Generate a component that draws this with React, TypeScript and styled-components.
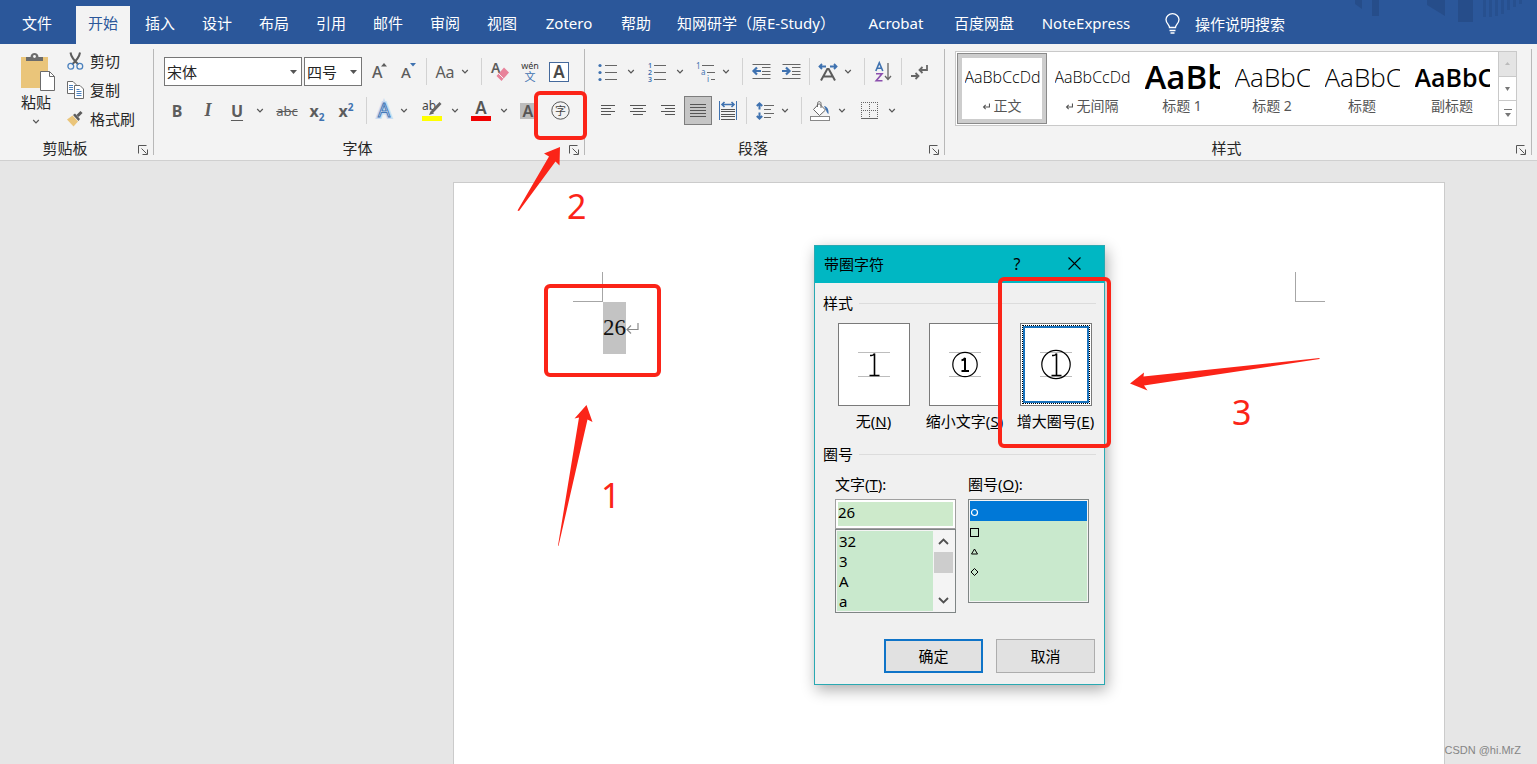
import React from "react";
import styled, { createGlobalStyle, css } from "styled-components";

const sans = `"Noto Sans", "Noto Sans CJK SC", sans-serif`;
const RED = "#fb2418";
const GREY = "#5c5c5c";
const BLUE = "#3f72b0";

const Global = createGlobalStyle`
  *, *::before, *::after { box-sizing: border-box; }
  body { margin: 0; font-family: ${sans}; font-size: 15px; color: #262626; background: #e6e6e6; }
  button, input, select { font: inherit; color: inherit; margin: 0; }
  svg { display: block; overflow: visible; }
`;

const Screen = styled.div`
  position: relative;
  display: flex;
  flex-direction: column;
  min-height: 100vh;
  overflow: hidden;
`;

/* ---------- tab bar ---------- */

const TabBar = styled.header`
  position: relative;
  display: flex;
  align-items: flex-end;
  gap: 3px;
  height: 44px;
  padding-left: 10px;
  background: #2b579a;
  color: #fff;
`;

const TabArt = styled.svg`
  position: absolute;
  right: 0;
  top: 0;
`;

const Tab = styled.a<{ $active?: boolean; $file?: boolean; $width?: number }>`
  display: flex;
  align-items: center;
  justify-content: center;
  height: 38px;
  width: ${(p) => p.$width ?? 54}px;
  margin-right: ${(p) => (p.$file ? 9 : 0)}px;
  padding-bottom: 5px;
  white-space: nowrap;
  text-decoration: none;
  color: ${(p) => (p.$active ? "#2b579a" : "#fff")};
  background: ${(p) => (p.$active ? "#f3f3f3" : "transparent")};
`;

const Ask = styled.button`
  display: flex;
  align-items: center;
  gap: 15px;
  height: 38px;
  padding: 0 0 3px 15px;
  border: 0;
  background: none;
  color: #fff;
  white-space: nowrap;
`;

/* ---------- ribbon ---------- */

const Ribbon = styled.div`
  display: flex;
  padding: 5px 5px 5px 0;
  background: #f3f3f3;
  border-bottom: 1px solid #d0d0d0;
`;

const Group = styled.section<{ $width?: number }>`
  display: flex;
  flex-direction: column;
  height: 106px;
  border-right: 1px solid #b8b8b8;
  ${(p) =>
    p.$width
      ? css`
          flex: 0 0 ${p.$width}px;
        `
      : css`
          flex: 1;
          min-width: 0;
        `}
`;

const GroupBody = styled.div`
  flex: 1;
  min-height: 0;
`;

const GroupFoot = styled.footer`
  display: flex;
  align-items: center;
  height: 16px;
  line-height: 16px;
  padding-right: 5px;
`;

const GroupName = styled.span`
  flex: 1;
  text-align: center;
  padding: 2px 8px 0 0;
`;

const Launcher = styled.button`
  padding: 5px 0 0;
  border: 0;
  background: none;
`;

const ToolRows = styled(GroupBody)`
  display: flex;
  flex-direction: column;
  gap: 10px;
  padding: 8px 0 0 10px;
`;

const ToolRow = styled.div`
  display: flex;
  align-items: center;
  height: 29px;
`;

const ToolButton = styled.button<{ $w: number; $after?: number; $pressed?: boolean }>`
  display: flex;
  align-items: center;
  justify-content: center;
  flex: none;
  width: ${(p) => p.$w}px;
  height: 29px;
  margin-right: ${(p) => p.$after ?? 0}px;
  padding: 0;
  color: ${GREY};
  border: ${(p) => (p.$pressed ? "1px solid #7d7d7d" : "0")};
  background: ${(p) => (p.$pressed ? "#c5c5c5" : "none")};
`;

const Rule = styled.span<{ $before: number; $after: number }>`
  flex: none;
  width: 1px;
  height: 27px;
  margin: 0 ${(p) => p.$after}px 0 ${(p) => p.$before}px;
  background: #d2d2d2;
`;

const Combo = styled.label<{ $w: number }>`
  position: relative;
  width: ${(p) => p.$w}px;
  height: 29px;
  margin-right: 2px;
  svg {
    position: absolute;
    right: 5px;
    top: 13px;
  }
`;

const ComboSelect = styled.select`
  appearance: none;
  width: 100%;
  height: 29px;
  padding: 0 0 0 2px;
  border: 1px solid #767676;
  border-radius: 0;
  background: #fff;
`;

const Letter = styled.span<{ $kind?: "bold" | "italic" | "underline" | "strike" | "script" }>`
  line-height: 20px;
  font-size: 16px;
  ${(p) => p.$kind === "bold" && "font-weight: 700;"}
  ${(p) => p.$kind === "italic" && `font: italic 700 18px "Liberation Serif", serif;`}
  ${(p) => p.$kind === "underline" && "font-weight: 700; text-decoration: underline 1px; text-underline-offset: 3px;"}
  ${(p) => p.$kind === "strike" && "font-size: 13px; text-decoration: line-through;"}
  ${(p) => p.$kind === "script" && "font-weight: 700;"}
  sub, sup {
    font-size: 10px;
    line-height: 0;
    color: ${BLUE};
  }
`;

/* ---------- clipboard ---------- */

const Clipboard = styled(GroupBody)`
  display: flex;
  gap: 8px;
  padding-left: 15px;
`;

const PasteButton = styled.button`
  display: flex;
  flex-direction: column;
  align-items: center;
  width: 42px;
  height: 80px;
  padding: 4px 0 0;
  border: 0;
  background: none;
  line-height: 22px;
`;

const PasteName = styled.span`
  margin-bottom: 6px;
`;

const ClipList = styled.div`
  display: flex;
  flex-direction: column;
  gap: 5px;
`;

const ClipButton = styled.button`
  display: flex;
  align-items: center;
  gap: 6px;
  height: 24px;
  padding: 0 0 0 2px;
  border: 0;
  background: none;
  line-height: 24px;
`;

/* ---------- style gallery ---------- */

const GalleryWrap = styled(GroupBody)`
  padding: 2px 14px 0 10px;
`;

const Gallery = styled.div`
  display: flex;
  height: 75px;
  padding: 1px 0 1px 1px;
  border: 1px solid #c9c9c9;
  background: #fff;
`;

const StyleList = styled.div`
  display: flex;
  flex: 1;
  min-width: 0;
  overflow: hidden;
`;

const StyleTile = styled.button<{ $current?: boolean }>`
  flex: 0 0 90px;
  display: flex;
  flex-direction: column;
  align-items: center;
  padding: ${(p) => (p.$current ? "5px 6px" : "6px 7px")};
  border: ${(p) => (p.$current ? "1px solid #8a8a8a" : "0")};
  box-shadow: ${(p) => (p.$current ? "inset 0 0 0 4px #cdcdcd" : "none")};
  background: none;
`;

const Preview = styled.span<{ $size: number; $weight?: number }>`
  display: block;
  width: 75px;
  height: 36px;
  line-height: 36px;
  overflow: hidden;
  text-align: left;
  white-space: nowrap;
  color: #000;
  font-family: "Open Sans", "Noto Sans", sans-serif;
  font-size: ${(p) => p.$size}px;
  font-weight: ${(p) => p.$weight ?? 300};
`;

const StyleName = styled.span`
  display: flex;
  align-items: center;
  gap: 4px;
  font-size: 14px;
  line-height: 24px;
  color: #555;
`;

const GalleryNav = styled.div`
  display: flex;
  flex-direction: column;
  flex: 0 0 18px;
  margin: -1px 0;
  border-left: 1px solid #c9c9c9;
`;

const NavButton = styled.button<{ $off?: boolean }>`
  display: flex;
  align-items: center;
  justify-content: center;
  flex: 1;
  padding: 0;
  border: 0;
  background: ${(p) => (p.$off ? "#e4e4e4" : "#fff")};
  & + & {
    border-top: 1px solid #c9c9c9;
  }
`;

/* ---------- document ---------- */

const Desk = styled.main`
  flex: 1;
  display: flex;
  padding: 21px 92px 0 453px;
`;

const Paper = styled.article`
  flex: 1;
  padding: 89px 119px 0;
  border: 1px solid #cbcbcb;
  border-bottom: 0;
  background: #fff;
`;

const MarginMarks = styled.div`
  display: flex;
  justify-content: space-between;
`;

const Mark = styled.span<{ $side: "left" | "right" }>`
  width: 30px;
  height: 30px;
  border-bottom: 1px solid #a6a6a6;
  border-${(p) => (p.$side === "left" ? "right" : "left")}: 1px solid #a6a6a6;
`;

const Paragraph = styled.p`
  display: flex;
  align-items: center;
  margin: 0;
  padding-left: 30px;
  font-family: "Liberation Serif", serif;
  font-size: 23px;
  line-height: 52px;
  color: #111;
`;

const Selected = styled.mark`
  background: #c3c3c3;
  color: inherit;
`;

/* ---------- dialog ---------- */

const Dialog = styled.section`
  position: absolute;
  left: 814px;
  top: 245px;
  width: 291px;
  border: 1px solid #2aa9b2;
  background: #f0f0f0;
  color: #000;
  box-shadow: 2px 5px 14px rgba(0, 0, 0, 0.32);
`;

const DialogTitle = styled.header`
  display: flex;
  align-items: center;
  height: 37px;
  padding: 0 9px;
  background: #00b7c3;
`;

const DialogName = styled.h2`
  flex: 1;
  margin: 0;
  padding-bottom: 2px;
  font-size: 15px;
  font-weight: 400;
`;

const TitleButton = styled.button<{ $w: number }>`
  display: flex;
  align-items: center;
  justify-content: center;
  width: ${(p) => p.$w}px;
  height: 37px;
  padding: 0 0 2px;
  border: 0;
  background: none;
  font-size: 16px;
`;

const DialogBody = styled.div`
  padding: 10px 8px 11px;
`;

const SectionHead = styled.h3`
  display: flex;
  align-items: center;
  gap: 6px;
  margin: 0;
  font-size: 15px;
  font-weight: 400;
  line-height: 20px;
  &::after {
    content: "";
    flex: 1;
    height: 1px;
    background: #dcdcdc;
  }
`;

const Choices = styled.div`
  display: grid;
  grid-template-columns: repeat(3, 91px);
  margin: 10px 0 13px 5px;
`;

const Choice = styled.label`
  display: flex;
  flex-direction: column;
  align-items: center;
  gap: 5px;
  line-height: 20px;
  white-space: nowrap;
  input {
    position: absolute;
    opacity: 0;
  }
`;

const ChoiceBox = styled.span<{ $on?: boolean }>`
  display: block;
  width: 72px;
  height: 83px;
  padding: 1px;
  border: 1px solid #7a7a7a;
  background: #fff;
  & > span {
    display: flex;
    align-items: center;
    justify-content: center;
    height: 79px;
    padding-bottom: 2px;
    ${(p) =>
      p.$on &&
      css`
        border: 1px dotted #000;
        box-shadow: inset 0 0 0 2px #1a73bd;
      `}
  }
`;

const Fields = styled.div`
  display: grid;
  grid-template-columns: 121px 121px;
  gap: 12px;
  margin: 10px 0 26px 12px;
`;

const Field = styled.div`
  display: flex;
  flex-direction: column;
`;

const FieldLabel = styled.label`
  margin-bottom: 5px;
  line-height: 20px;
`;

const CharInput = styled.input`
  width: 100%;
  height: 30px;
  padding: 0 2px 4px;
  border: 1px solid #a0a0a0;
  border-radius: 0;
  outline: 0;
  background: #cdeacb;
  box-shadow: inset 0 0 0 2px #fff;
`;

const ListFrame = styled.div<{ $h: number }>`
  display: flex;
  height: ${(p) => p.$h}px;
  padding: 1px;
  border: 1px solid #7f8585;
  background: #f4f4f4;
`;

const Options = styled.ul`
  flex: 1;
  margin: 0;
  padding: 0;
  list-style: none;
  background: #c9e9cd;
  overflow: hidden;
`;

const Option = styled.li<{ $on?: boolean; $mark?: boolean }>`
  display: flex;
  align-items: center;
  height: 20px;
  padding: ${(p) => (p.$mark ? "3px 0 0 0" : "0 0 0 2px")};
  line-height: 20px;
  color: ${(p) => (p.$on ? "#fff" : "#000")};
  background: ${(p) => (p.$on ? "#0078d7" : "transparent")};
`;

const ScrollBar = styled.div`
  display: flex;
  flex-direction: column;
  align-items: center;
  width: 21px;
  background: #f4f4f4;
`;

const ScrollButton = styled.button`
  display: flex;
  align-items: center;
  justify-content: center;
  width: 19px;
  height: 21px;
  padding: 0;
  border: 0;
  background: none;
`;

const ScrollThumb = styled.span`
  width: 19px;
  height: 21px;
  margin-bottom: auto;
  background: #cdcdcd;
`;

const Actions = styled.footer`
  display: flex;
  justify-content: flex-end;
  gap: 13px;
  padding-right: 1px;
`;

const ActionButton = styled.button<{ $primary?: boolean }>`
  width: 99px;
  height: 34px;
  padding: 0 0 2px;
  border: ${(p) => (p.$primary ? "2px solid #0f74c8" : "1px solid #adadad")};
  background: #e1e1e1;
`;

/* ---------- tutorial annotations ---------- */

const Frame = styled.div<{ $x: number; $y: number; $w: number; $h: number }>`
  position: absolute;
  left: ${(p) => p.$x}px;
  top: ${(p) => p.$y}px;
  width: ${(p) => p.$w}px;
  height: ${(p) => p.$h}px;
  border: 4px solid ${RED};
  border-radius: 6px;
  pointer-events: none;
`;

const ArrowSvg = styled.svg<{ $x: number; $y: number }>`
  position: absolute;
  left: ${(p) => p.$x}px;
  top: ${(p) => p.$y}px;
  fill: ${RED};
  pointer-events: none;
`;

const StepNumber = styled.span<{ $x: number; $y: number }>`
  position: absolute;
  left: ${(p) => p.$x}px;
  top: ${(p) => p.$y}px;
  font-size: 34px;
  line-height: 40px;
  color: ${RED};
`;

const Watermark = styled.span`
  position: absolute;
  right: 16px;
  bottom: 6px;
  font: 11px/16px "Liberation Sans", sans-serif;
  color: #858585;
`;

/* ---------- icons ---------- */

const Chevron = () => (
  <svg width="8" height="5" viewBox="0 0 8 5" fill="none" stroke="#555" strokeWidth="1.2">
    <path d="M1.2 1 4 3.8 6.8 1" />
  </svg>
);

const Triangle = ({ color = "#555" }: { color?: string }) => (
  <svg width="7" height="4" viewBox="0 0 7 4" fill={color}>
    <path d="M0 0h7L3.5 4z" />
  </svg>
);

const LauncherIcon = () => (
  <svg width="10" height="10" viewBox="0 0 10 10" fill="none" stroke="#555">
    <path d="M.5 8.500V.5h8M3.500 3.500l5 5M9.500 4.500v5h-5" />
  </svg>
);

const PasteIcon = () => (
  <svg width="40" height="38" viewBox="-4 0 40 38">
    <rect x="1" y="4" width="27" height="31" fill="#eac57a" />
    <path d="M6 4h4.500c0-5.500 8-5.500 8 0H23v4H6z" fill="#6b6b6b" />
    <circle cx="14.500" cy="3.500" r="1.400" fill="#f3f3f3" />
    <path d="M20.500 18.500h9l5 5v14h-14z" fill="#fff" stroke="#6b6b6b" />
    <path d="M29.500 18.500v5h5" fill="none" stroke="#6b6b6b" />
  </svg>
);

const CutIcon = () => (
  <svg width="17" height="18" viewBox="0 0 17 18" fill="none">
    <path d="M3.500.5C4 4 7 8.500 11.500 12.500M13 .5C12.500 4 9.500 8.500 5 12.500" stroke="#5c5c5c" strokeWidth="2" />
    <circle cx="3.800" cy="14.300" r="2.900" stroke="#4a80bd" strokeWidth="1.300" />
    <circle cx="12.800" cy="14.300" r="2.900" stroke="#4a80bd" strokeWidth="1.300" />
  </svg>
);

const CopyIcon = () => (
  <svg width="17" height="18" viewBox="0 0 17 18" fill="#fff" stroke="#6b6b6b">
    <path d="M.5.5h5.500l3 3v9H.5z" />
    <path d="M2 4.500h4M2 6.500h4M2 8.500h4" stroke="#4a80bd" />
    <path d="M7.500 4.500h5.500l3.500 3.500v9.500h-9z" />
    <path d="M9.500 8.500h3M9.500 10.500h5M9.500 12.500h5M9.500 14.500h5" stroke="#4a80bd" />
  </svg>
);

const BrushIcon = () => (
  <svg width="17" height="16" viewBox="0 0 17 16">
    <path d="M5.500 4.500 11 10.500 6.500 15.500 0 8.500z" fill="#eac57a" />
    <path d="M6 4 8 2.500 13 8 11.500 10z" fill="#5c5c5c" />
    <path d="M10.500 5 14.500 1" stroke="#5c5c5c" strokeWidth="3" />
  </svg>
);

const GrowIcon = ({ down }: { down?: boolean }) => (
  <svg width="16" height="18" viewBox="0 0 16 18" fill={GREY}>
    <text x="1" y="15" fontSize={down ? 15 : 16} fontWeight="500">A</text>
    {down ? <path d="M10 0h6l-3 3.500z" fill={BLUE} /> : <path d="M10 3.500h6L13 0z" />}
  </svg>
);

const EraserIcon = () => (
  <svg width="20" height="20" viewBox="0 0 20 20">
    <text x="1" y="11" fontSize="14" fontWeight="600" fill={GREY}>A</text>
    <path d="M14 5.500 19 10.500 11.500 19 6.500 14z" fill="#e8829a" />
    <path d="M8.500 11.500 13.500 16.500" stroke="#f3f3f3" />
  </svg>
);

const PinyinIcon = () => (
  <svg width="20" height="20" viewBox="0 0 20 20">
    <text x="11" y="7" fontSize="9" textAnchor="middle" fill="#333">wén</text>
    <text x="11" y="19" fontSize="11" textAnchor="middle" fill={BLUE}>文</text>
  </svg>
);

const BoxedA = () => (
  <svg width="20" height="20" viewBox="0 0 20 20">
    <rect x=".5" y=".5" width="19" height="19" fill="#fff" stroke="#44699c" />
    <text x="10" y="16" fontSize="17" fontWeight="600" textAnchor="middle" fill="#4a4a4a">A</text>
  </svg>
);

const EffectA = () => (
  <svg width="18" height="20" viewBox="0 0 18 20">
    <text x="9" y="16" fontSize="19" textAnchor="middle" fill="#fff" stroke="#c9dcf1" strokeWidth="4">A</text>
    <text x="9" y="16" fontSize="19" textAnchor="middle" fill="#fff" stroke="#4478b8" strokeWidth="1">A</text>
  </svg>
);

const HighlightIcon = () => (
  <svg width="20" height="20" viewBox="0 0 20 20">
    <text x="0" y="9" fontSize="12" fill="#444">ab</text>
    <path d="M18.500 2 10 11" stroke="#666" strokeWidth="2.800" />
    <path d="M9 9.500l3 3-5 1.500z" fill="#666" />
    <rect y="15" width="20" height="5" fill="#ff0" />
  </svg>
);

const FontColorIcon = () => (
  <svg width="20" height="20" viewBox="0 0 20 20">
    <text x="10" y="13" fontSize="17" fontWeight="600" textAnchor="middle" fill="#555">A</text>
    <rect y="15" width="20" height="5" fill="#f00000" />
  </svg>
);

const ShadedA = () => (
  <svg width="16" height="18" viewBox="0 0 16 18">
    <rect y="1" width="16" height="16" fill="#bcbcbc" />
    <text x="8" y="15" fontSize="16" fontWeight="600" textAnchor="middle" fill="#555">A</text>
  </svg>
);

const CircledChar = () => (
  <svg width="19" height="19" viewBox="0 0 19 19">
    <circle cx="9.500" cy="9.500" r="8.700" fill="none" stroke="#555" />
    <text x="9.500" y="13.500" fontSize="11" textAnchor="middle" fill="#444">字</text>
  </svg>
);

const BulletsIcon = () => (
  <svg width="20" height="18" viewBox="0 0 20 18">
    <path d="M7 2.500h12M7 9.500h12M7 16.500h12" stroke="#666" />
    <g fill={BLUE}>
      <circle cx="2" cy="2.500" r="1.600" />
      <circle cx="2" cy="9.500" r="1.600" />
      <circle cx="2" cy="16.500" r="1.600" />
    </g>
  </svg>
);

const NumbersIcon = () => (
  <svg width="18" height="18" viewBox="0 0 18 18">
    <path d="M6 2.500h12M6 9.500h12M6 16.500h12" stroke="#666" />
    <g fill={BLUE} fontSize="7" fontWeight="600">
      <text x="0" y="5">1</text>
      <text x="0" y="12">2</text>
      <text x="0" y="19">3</text>
    </g>
  </svg>
);

const MultiIcon = () => (
  <svg width="20" height="18" viewBox="0 0 20 18">
    <path d="M6 2.500h12M11 9.500h8M15 16.500h4" stroke="#666" />
    <g fill={BLUE} fontSize="8">
      <text x="0" y="6">1</text>
      <text x="5" y="12">a</text>
      <text x="11" y="19">i</text>
    </g>
  </svg>
);

const IndentIcon = ({ out }: { out?: boolean }) => (
  <svg width="19" height="17" viewBox="0 0 19 17" fill="none">
    <path d="M.5 1.500h18M10 4.500h8.500M10 8.500h8.500M10 11.500h8.500M.5 15.500h18" stroke="#666" />
    <path
      d={out ? "M9 8H2M5 4.500 1.500 8 5 11.500" : "M0 8h7M4 4.500 7.500 8 4 11.500"}
      stroke={BLUE}
      strokeWidth="2.200"
    />
  </svg>
);

const AsianLayoutIcon = () => (
  <svg width="20" height="18" viewBox="0 0 20 18" fill="none">
    <path d="M8 3.500H1.500M4 1 1.500 3.500 4 6M12 3.500h6.500M16 1l2.500 2.500L16 6" stroke={BLUE} strokeWidth="1.800" />
    <path d="M3 17.500 9.300 6h1.400L17 17.500M5.500 13.500h9" stroke="#5c5c5c" strokeWidth="2" />
  </svg>
);

const SortIcon = () => (
  <svg width="17" height="20" viewBox="0 0 17 20">
    <path d="M.8 9 4.300.8 7.800 9M2 6.300h4.600" fill="none" stroke={BLUE} strokeWidth="1.600" />
    <path d="M1 11.800h6L1.200 18.800H7.500" fill="none" stroke="#8b4fae" strokeWidth="1.600" />
    <path d="M13 1v16M10 14l3 3.500 3-3.500" fill="none" stroke="#666" strokeWidth="1.300" />
  </svg>
);

const MarksIcon = () => (
  <svg width="17" height="16" viewBox="0 0 17 16" fill="none" stroke="#666" strokeWidth="1.800">
    <path d="M16 1v5H9M11.500 3 8.500 6l3 3M0 12h6.500M4.500 9l3 3-3 3" />
  </svg>
);

const AlignIcon = ({ mode }: { mode: "left" | "center" | "right" | "full" }) => {
  const lines = {
    left: "M1 2.500h14M1 5.500h10M1 8.500h14M1 11.500h10",
    center: "M0 2.500h16M3 5.500h10M0 8.500h16M3 11.500h10",
    right: "M1 2.500h14M5 5.500h10M1 8.500h14M5 11.500h10",
    full: "M0 1.500h16M0 4.500h16M0 7.500h16M0 10.500h16M0 13.500h16",
  }[mode];
  return (
    <svg width="16" height="15" viewBox="0 0 16 15" fill="none" stroke="#555">
      <path d={lines} />
    </svg>
  );
};

const DistributeIcon = () => (
  <svg width="18" height="19" viewBox="0 0 18 19" fill="none">
    <path d="M.5 0v19M17.500 0v19" stroke={BLUE} />
    <path d="M3 3.500h12M5.500 1 3 3.500 5.500 6M12.500 1 15 3.500 12.500 6" stroke={BLUE} strokeWidth="1.600" />
    <path d="M2 8.500h14M2 10.500h14M2 13.500h14M2 15.500h14M2 18.500h14" stroke="#555" />
  </svg>
);

const SpacingIcon = () => (
  <svg width="19" height="18" viewBox="0 0 19 18" fill="none">
    <path d="M3.500 1.500v6M.8 4 3.500 1.300 6.200 4M3.500 10.500v6M.8 14l2.700 2.700L6.200 14" stroke={BLUE} strokeWidth="2" />
    <path d="M8 3.500h10M8 7.500h7M8 11.500h10M8 15.500h7" stroke="#666" />
  </svg>
);

const FillIcon = () => (
  <svg width="20" height="20" viewBox="0 0 20 20" fill="none">
    <path d="M9 2.500 15.500 9 9.500 14.500 3.500 8.500z" fill="#fff" stroke="#666" />
    <path d="M7.500 6V2.500c0-2.500 3.500-2.500 3.500 0V7" stroke="#666" />
    <path d="M14 5c3 .5 5 3 4.500 8-1-.5-2-2-2.500-4z" fill={BLUE} />
    <rect x=".5" y="15.500" width="19" height="4" fill="#fff" stroke="#888" />
  </svg>
);

const BordersIcon = () => (
  <svg width="17" height="17" viewBox="0 0 17 17" fill="none" stroke="#666">
    <path d="M.5 0v16M16.500 0v16M0 .5h17M8.500 0v16M0 8.500h17" strokeDasharray="1 1" />
    <path d="M0 16.500h17" />
  </svg>
);

const ReturnIcon = ({ size, color }: { size: number; color: string }) => (
  <svg width={size} height={size} viewBox="0 0 13 13" fill="none" stroke={color} strokeWidth={size > 10 ? 1.2 : 2}>
    <path d="M12 1v6.500H1M5 3.500l-4 4 4 4" />
  </svg>
);

const BulbIcon = () => (
  <svg width="15" height="21" viewBox="0 0 15 21" fill="none" stroke="#fff" strokeWidth="1.300">
    <path d="M4.500 14.500c0-3-3.500-4-3.500-8a6.500 5.800 0 0 1 13 0c0 4-3.500 5-3.500 8zM4.500 17.500h6M5.500 20h4" />
  </svg>
);

const SampleIcon = ({ kind }: { kind: "plain" | "small" | "large" }) => (
  <svg width="32" height="32" viewBox="0 0 32 32">
    <path d="M0 4.500h32M0 28.500h32" stroke="#bdbdbd" />
    {kind !== "plain" && (
      <circle cx="16" cy="16.500" r={kind === "small" ? 12.2 : 14.2} fill={kind === "small" ? "#fff" : "none"} stroke="#000" strokeWidth="1.200" />
    )}
    {kind === "small" ? (
      <path d="M12.500 12.200q2.500-.2 3.500-2.200v13M12.500 23h7.500" fill="none" stroke="#000" strokeWidth="2" />
    ) : (
      <path d="M12 7.500h1.500q2 0 3-2v22M11.500 27.500h10" fill="none" stroke="#000" strokeWidth="1.600" />
    )}
  </svg>
);

const MarkIcon = ({ kind }: { kind: string }) => (
  <svg width="9" height="9" viewBox="0 0 9 9" fill="none" stroke="currentColor">
    {kind === "circle" && <circle cx="4.500" cy="4.500" r="3" strokeWidth="1.200" />}
    {kind === "square" && <rect x=".5" y=".5" width="8" height="8" />}
    {kind === "triangle" && <path d="M4.500 1 7.500 6h-6z" />}
    {kind === "diamond" && <path d="M4.500 .5 8 4 4.500 7.500 1 4z" />}
  </svg>
);

const ScrollChevron = ({ up }: { up?: boolean }) => (
  <svg width="11" height="7" viewBox="0 0 11 7" fill="none" stroke="#505050" strokeWidth="1.800">
    <path d={up ? "M1 6 5.500 1.500 10 6" : "M1 1l4.500 4.500L10 1"} />
  </svg>
);

/* ---------- pieces ---------- */

const tabs: { name: string; width?: number; active?: boolean; file?: boolean }[] = [
  { name: "文件", file: true },
  { name: "开始", active: true },
  { name: "插入" },
  { name: "设计" },
  { name: "布局" },
  { name: "引用" },
  { name: "邮件" },
  { name: "审阅" },
  { name: "视图" },
  { name: "Zotero", width: 74 },
  { name: "帮助" },
  { name: "知网研学（原E-Study）", width: 180 },
  { name: "Acrobat", width: 94 },
  { name: "百度网盘", width: 76 },
  { name: "NoteExpress", width: 122 },
];

const styleTiles = [
  { name: "正文", sample: "AaBbCcDd", size: 16, mark: true, current: true },
  { name: "无间隔", sample: "AaBbCcDd", size: 16, mark: true },
  { name: "标题 1", sample: "AaBb", size: 33, weight: 600 },
  { name: "标题 2", sample: "AaBbC", size: 26 },
  { name: "标题", sample: "AaBbC", size: 26 },
  { name: "副标题", sample: "AaBbC", size: 25, weight: 600 },
];

type ToolProps = { label: string; w: number; after?: number; pressed?: boolean; children: React.ReactNode };

const Tool = ({ label, w, after, pressed, children }: ToolProps) => (
  <ToolButton type="button" aria-label={label} aria-pressed={pressed} $w={w} $after={after} $pressed={pressed}>
    {children}
  </ToolButton>
);

const More = ({ w, after }: { w: number; after?: number }) => (
  <Tool label="更多" w={w} after={after}>
    <Chevron />
  </Tool>
);

const Foot = ({ name }: { name: string }) => (
  <GroupFoot>
    <GroupName>{name}</GroupName>
    <Launcher type="button" aria-label={name}>
      <LauncherIcon />
    </Launcher>
  </GroupFoot>
);

const FontGroup = () => (
  <Group $width={431}>
    <ToolRows>
      <ToolRow>
        <Combo $w={138}>
          <ComboSelect aria-label="字体"><option>宋体</option></ComboSelect>
          <Triangle />
        </Combo>
        <Combo $w={58}>
          <ComboSelect aria-label="字号"><option>四号</option></ComboSelect>
          <Triangle />
        </Combo>
        <Tool label="增大字号" w={30}><GrowIcon /></Tool>
        <Tool label="减小字号" w={28}><GrowIcon down /></Tool>
        <Rule $before={4} $after={4} />
        <Tool label="更改大小写" w={28}><Letter>Aa</Letter></Tool>
        <More w={12} />
        <Rule $before={10} $after={8} />
        <Tool label="清除格式" w={20}><EraserIcon /></Tool>
        <Tool label="拼音指南" w={38}><PinyinIcon /></Tool>
        <Tool label="字符边框" w={22}><BoxedA /></Tool>
      </ToolRow>
      <ToolRow>
        <Tool label="加粗" w={26}><Letter $kind="bold">B</Letter></Tool>
        <Tool label="倾斜" w={36}><Letter $kind="italic">I</Letter></Tool>
        <Tool label="下划线" w={22}><Letter $kind="underline">U</Letter></Tool>
        <More w={24} />
        <Tool label="删除线" w={30}><Letter $kind="strike">abc</Letter></Tool>
        <Tool label="下标" w={30}><Letter $kind="script">x<sub>2</sub></Letter></Tool>
        <Tool label="上标" w={28}><Letter $kind="script">x<sup>2</sup></Letter></Tool>
        <Rule $before={6} $after={5} />
        <Tool label="文本效果" w={24}><EffectA /></Tool>
        <More w={16} after={6} />
        <Tool label="突出显示" w={28}><HighlightIcon /></Tool>
        <More w={18} after={4} />
        <Tool label="字体颜色" w={26}><FontColorIcon /></Tool>
        <More w={20} />
        <Tool label="字符底纹" w={28}><ShadedA /></Tool>
        <Tool label="带圈字符" w={36}><CircledChar /></Tool>
      </ToolRow>
    </ToolRows>
    <Foot name="字体" />
  </Group>
);

const ParagraphGroup = () => (
  <Group $width={360}>
    <ToolRows>
      <ToolRow>
        <Tool label="项目符号" w={26}><BulletsIcon /></Tool>
        <More w={20} />
        <Tool label="编号" w={32}><NumbersIcon /></Tool>
        <More w={14} after={5} />
        <Tool label="多级列表" w={28}><MultiIcon /></Tool>
        <More w={12} />
        <Rule $before={10} $after={8} />
        <Tool label="减少缩进量" w={20} after={10}><IndentIcon out /></Tool>
        <Tool label="增加缩进量" w={20}><IndentIcon /></Tool>
        <Rule $before={8} $after={8} />
        <Tool label="中文版式" w={20}><AsianLayoutIcon /></Tool>
        <More w={20} />
        <Rule $before={6} $after={8} />
        <Tool label="排序" w={20}><SortIcon /></Tool>
        <Rule $before={8} $after={8} />
        <Tool label="显示编辑标记" w={18}><MarksIcon /></Tool>
      </ToolRow>
      <ToolRow>
        <Tool label="左对齐" w={26}><AlignIcon mode="left" /></Tool>
        <Tool label="居中" w={34}><AlignIcon mode="center" /></Tool>
        <Tool label="右对齐" w={26} after={3}><AlignIcon mode="right" /></Tool>
        <Tool label="两端对齐" w={28} pressed><AlignIcon mode="full" /></Tool>
        <Tool label="分散对齐" w={32}><DistributeIcon /></Tool>
        <Rule $before={2} $after={8} />
        <Tool label="行距" w={20}><SpacingIcon /></Tool>
        <More w={20} />
        <Rule $before={6} $after={8} />
        <Tool label="底纹" w={20}><FillIcon /></Tool>
        <More w={24} after={5} />
        <Tool label="边框" w={20}><BordersIcon /></Tool>
        <More w={26} />
      </ToolRow>
    </ToolRows>
    <Foot name="段落" />
  </Group>
);

const StyleGroup = () => (
  <Group>
    <GalleryWrap>
      <Gallery>
        <StyleList>
          {styleTiles.map((t) => (
            <StyleTile key={t.name} type="button" $current={t.current}>
              <Preview $size={t.size} $weight={t.weight}>{t.sample}</Preview>
              <StyleName>
                {t.mark && <ReturnIcon size={7} color="#555" />}
                {t.name}
              </StyleName>
            </StyleTile>
          ))}
        </StyleList>
        <GalleryNav>
          <NavButton type="button" aria-label="上一行" $off>
            <svg width="5" height="3" viewBox="0 0 5 3" fill="#bbb"><path d="M0 3h5L2.500 0z" /></svg>
          </NavButton>
          <NavButton type="button" aria-label="下一行">
            <svg width="5" height="4" viewBox="0 0 5 4" fill="#777"><path d="M0 0h5L2.500 4z" /></svg>
          </NavButton>
          <NavButton type="button" aria-label="其他">
            <svg width="8" height="8" viewBox="0 0 8 8" fill="#777"><path d="M0 0h8v1H0zM1 4h6L4 8z" /></svg>
          </NavButton>
        </GalleryNav>
      </Gallery>
    </GalleryWrap>
    <Foot name="样式" />
  </Group>
);

const choices: { name: string; hotkey: string; kind: "plain" | "small" | "large" }[] = [
  { name: "无", hotkey: "N", kind: "plain" },
  { name: "缩小文字", hotkey: "S", kind: "small" },
  { name: "增大圈号", hotkey: "E", kind: "large" },
];

const EncloseDialog = () => (
  <Dialog role="dialog" aria-labelledby="enclose-title">
    <DialogTitle>
      <DialogName id="enclose-title">带圈字符</DialogName>
      <TitleButton type="button" aria-label="帮助" $w={72}>?</TitleButton>
      <TitleButton type="button" aria-label="关闭" $w={42}>
        <svg width="13" height="13" viewBox="0 0 13 13" stroke="#000" strokeWidth="1.100"><path d="M.5.5l12 12M12.500.5l-12 12" /></svg>
      </TitleButton>
    </DialogTitle>
    <DialogBody>
      <SectionHead>样式</SectionHead>
      <Choices>
        {choices.map((c) => (
          <Choice key={c.kind}>
            <input type="radio" name="enclose-style" defaultChecked={c.kind === "large"} />
            <ChoiceBox $on={c.kind === "large"}>
              <span><SampleIcon kind={c.kind} /></span>
            </ChoiceBox>
            <span>{c.name}(<u>{c.hotkey}</u>)</span>
          </Choice>
        ))}
      </Choices>
      <SectionHead>圈号</SectionHead>
      <Fields>
        <Field>
          <FieldLabel htmlFor="enclose-text">文字(<u>T</u>):</FieldLabel>
          <CharInput id="enclose-text" type="text" defaultValue="26" />
          <ListFrame $h={84}>
            <Options role="listbox" aria-label="文字">
              {["32", "3", "A", "a"].map((v) => (
                <Option key={v} role="option">{v}</Option>
              ))}
            </Options>
            <ScrollBar>
              <ScrollButton type="button" aria-label="向上"><ScrollChevron up /></ScrollButton>
              <ScrollThumb />
              <ScrollButton type="button" aria-label="向下"><ScrollChevron /></ScrollButton>
            </ScrollBar>
          </ListFrame>
        </Field>
        <Field>
          <FieldLabel id="enclose-mark">圈号(<u>O</u>):</FieldLabel>
          <ListFrame $h={104}>
            <Options role="listbox" aria-labelledby="enclose-mark">
              {["circle", "square", "triangle", "diamond"].map((k, i) => (
                <Option key={k} role="option" aria-label={k} aria-selected={i === 0} $mark $on={i === 0}>
                  <MarkIcon kind={k} />
                </Option>
              ))}
            </Options>
          </ListFrame>
        </Field>
      </Fields>
      <Actions>
        <ActionButton type="button" $primary>确定</ActionButton>
        <ActionButton type="button">取消</ActionButton>
      </Actions>
    </DialogBody>
  </Dialog>
);

export default function App() {
  return (
    <Screen>
      <Global />
      <TabBar>
        <TabArt width="190" height="24" viewBox="0 0 190 24" fill="#264d8a">
          <path d="M8 0h7v9l-7-5zM25 0h7v16h-7zM80 0h18v16L80 5zM111 0h15v22h-15z" />
          <path d="M136 0h3v17h-3zM142 0h3v17h-3zM148 0h3v16h-3zM154 0h3v14h-3zM160 0h3v10h-3zM166 0h3v7h-3zM172 0h3v4h-3z" opacity=".7" />
        </TabArt>
        {tabs.map((t) => (
          <Tab key={t.name} href="#" $active={t.active} $file={t.file} $width={t.width}>
            {t.name}
          </Tab>
        ))}
        <Ask type="button">
          <BulbIcon />
          操作说明搜索
        </Ask>
      </TabBar>

      <Ribbon>
        <Group $width={154}>
          <Clipboard>
            <PasteButton type="button">
              <PasteIcon />
              <PasteName>粘贴</PasteName>
              <Chevron />
            </PasteButton>
            <ClipList>
              <ClipButton type="button"><CutIcon />剪切</ClipButton>
              <ClipButton type="button"><CopyIcon />复制</ClipButton>
              <ClipButton type="button"><BrushIcon />格式刷</ClipButton>
            </ClipList>
          </Clipboard>
          <Foot name="剪贴板" />
        </Group>
        <FontGroup />
        <ParagraphGroup />
        <StyleGroup />
      </Ribbon>

      <Desk>
        <Paper>
          <MarginMarks>
            <Mark $side="left" />
            <Mark $side="right" />
          </MarginMarks>
          <Paragraph>
            <Selected>26</Selected>
            <ReturnIcon size={13} color="#8a8a8a" />
          </Paragraph>
        </Paper>
      </Desk>

      <EncloseDialog />

      <Frame $x={544} $y={284} $w={117} $h={93} />
      <Frame $x={534} $y={91} $w={53} $h={49} />
      <Frame $x={998} $y={277} $w={113} $h={171} />
      <ArrowSvg $x={558} $y={405} width="36" height="142" viewBox="0 0 36 142">
        <path d="M28.500 0 34.500 17 29.500 14.500.5 141 0 140.500 21 12.500 16.500 13.500z" />
      </ArrowSvg>
      <ArrowSvg $x={518} $y={147} width="43" height="65" viewBox="0 0 43 65">
        <path d="M42 0 41.500 18.500 37.500 14.500 1 64-.5 63.500 31 9.500 26 6.500z" />
      </ArrowSvg>
      <ArrowSvg $x={1130} $y={358} width="190" height="33" viewBox="0 0 190 33">
        <path d="M0 25.500 14 14.500 13.500 18.500 189.500 0V1L14 27.500 17.500 32.500z" />
      </ArrowSvg>
      <StepNumber $x={601} $y={475}>1</StepNumber>
      <StepNumber $x={567} $y={186}>2</StepNumber>
      <StepNumber $x={1232} $y={392}>3</StepNumber>
      <Watermark>CSDN @hi.MrZ</Watermark>
    </Screen>
  );
}
